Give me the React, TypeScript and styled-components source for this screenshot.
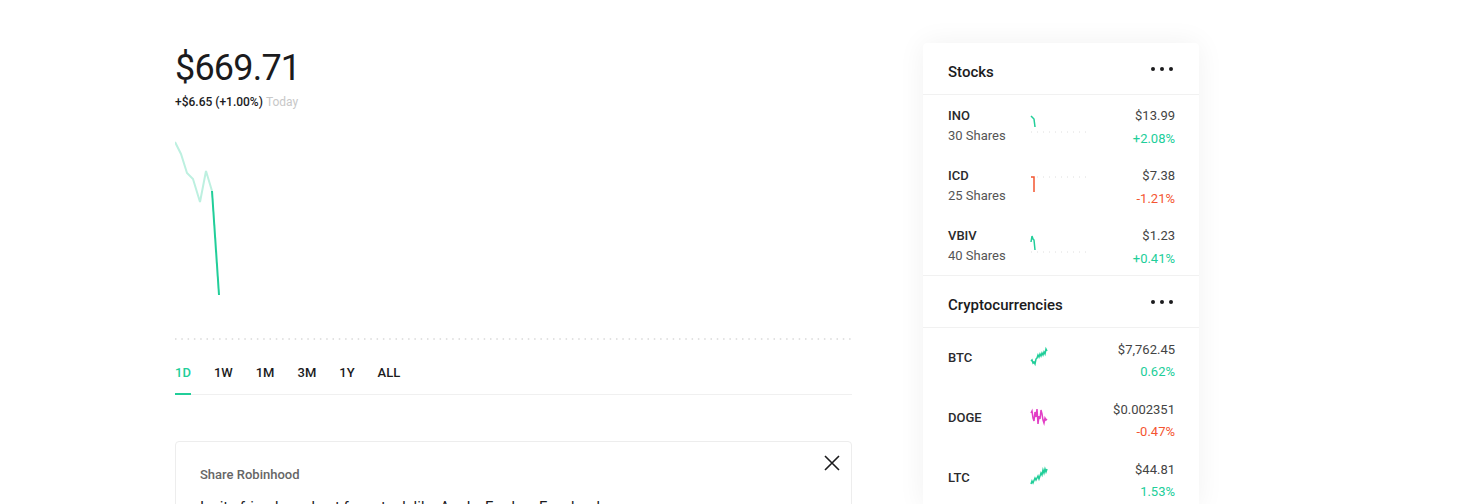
import React, { useState } from "react";
import styled, { createGlobalStyle } from "styled-components";

const GREEN = "#21ce99";
const GREEN_LIGHT = "#bdf0e0";
const RED = "#f45531";
const MAGENTA = "#e23fc6";
const TEXT = "#1b1b1d";

const GlobalStyle = createGlobalStyle`
  html, body {
    margin: 0;
    padding: 0;
    background: #fff;
    overflow: hidden;
  }
  body {
    font-family: Roboto, "Noto Sans", "Liberation Sans", sans-serif;
    color: ${TEXT};
    -webkit-font-smoothing: antialiased;
  }
`;

type Stock = { ticker: string; shares: string; price: string; change: string; up: boolean; line: string; flatY: number };
type Crypto = { ticker: string; price: string; change: string; up: boolean; color: string; line: string };

const stocks: Stock[] = [
  { ticker: "INO", shares: "30 Shares", price: "$13.99", change: "+2.08%", up: true, line: "1,10 2,11 3,12 4,13 5,21", flatY: 26 },
  { ticker: "ICD", shares: "25 Shares", price: "$7.38", change: "-1.21%", up: false, line: "1,11 4,11 4,26", flatY: 11 },
  { ticker: "VBIV", shares: "40 Shares", price: "$1.23", change: "+0.41%", up: true, line: "1,16 2,10 3,13 4,14 5,24", flatY: 26 },
];

const cryptos: Crypto[] = [
  {
    ticker: "BTC",
    price: "$7,762.45",
    change: "0.62%",
    up: true,
    color: GREEN,
    line: "1,23 2,22 3,25 4,24 5,26 6,21 7,20 8,17 9,19 10,16 11,18 12,15 13,17 14,14 15,16 16,11 17,13",
  },
  {
    ticker: "DOGE",
    price: "$0.002351",
    change: "-0.47%",
    up: false,
    color: MAGENTA,
    line: "1,15 2,13 3,20 4,23 5,14 6,19 7,11 8,26 9,18 10,21 11,12 12,16 13,22 14,25 15,20 16,22 17,21",
  },
  {
    ticker: "LTC",
    price: "$44.81",
    change: "1.53%",
    up: true,
    color: GREEN,
    line: "1,26 2,23 3,25 5,20 6,22 8,18 9,21 11,15 12,17 13,12 14,15 15,11 16,14 17,11",
  },
];

const ranges = ["1D", "1W", "1M", "3M", "1Y", "ALL"];

export default function App() {
  const [range, setRange] = useState("1D");
  const [showShare, setShowShare] = useState(true);

  return (
    <Page>
      <GlobalStyle />
      <Main>
        <Price>$669.71</Price>
        <Change>
          +$6.65 (+1.00%) <Muted>Today</Muted>
        </Change>

        <Chart width="677" height="225" viewBox="0 0 677 225">
          <line x1="0" y1="218" x2="677" y2="218" stroke="#d9d9d9" strokeWidth="1.5" strokeDasharray="1.5 4.8" />
          <polyline points="0,21 6,33 12,52 18,58 25,81 31,50 37,70" fill="none" stroke={GREEN_LIGHT} strokeWidth="2" />
          <polyline points="37,70 44,174" fill="none" stroke={GREEN} strokeWidth="2" />
        </Chart>

        <TabBar>
          {ranges.map((r) => (
            <Tab key={r} active={r === range} onClick={() => setRange(r)}>
              {r}
            </Tab>
          ))}
        </TabBar>

        {showShare && (
          <ShareCard>
            <ShareTitle>Share Robinhood</ShareTitle>
            <CloseButton onClick={() => setShowShare(false)} aria-label="close">
              <svg width="16" height="16" viewBox="0 0 16 16">
                <path d="M1 1 L15 15 M15 1 L1 15" stroke="#1b1b1d" strokeWidth="1.6" fill="none" />
              </svg>
            </CloseButton>
            <ShareText>Invite friends and get free stock like Apple, Ford, or Facebook.</ShareText>
          </ShareCard>
        )}
      </Main>

      <Sidebar>
        <Section>
          <SectionHeader>
            <SectionTitle>Stocks</SectionTitle>
            <Dots />
          </SectionHeader>
          {stocks.map((s) => (
            <Row key={s.ticker}>
              <div>
                <Ticker>{s.ticker}</Ticker>
                <Sub>{s.shares}</Sub>
              </div>
              <svg width="58" height="40" viewBox="0 0 58 40">
                <line x1="1" y1={s.flatY} x2="58" y2={s.flatY} stroke="#dedede" strokeWidth="1" strokeDasharray="1 5" />
                <polyline points={s.line} fill="none" stroke={s.up ? GREEN : RED} strokeWidth="1.5" />
              </svg>
              <Values>
                <Value>{s.price}</Value>
                <Percent up={s.up}>{s.change}</Percent>
              </Values>
            </Row>
          ))}
        </Section>

        <Section>
          <SectionHeader>
            <SectionTitle>Cryptocurrencies</SectionTitle>
            <Dots />
          </SectionHeader>
          {cryptos.map((c) => (
            <Row key={c.ticker} crypto>
              <Ticker>{c.ticker}</Ticker>
              <svg width="58" height="40" viewBox="0 0 58 40">
                <polyline points={c.line} fill="none" stroke={c.color} strokeWidth="1.5" />
              </svg>
              <Values crypto>
                <Value>{c.price}</Value>
                <Percent up={c.up} crypto>{c.change}</Percent>
              </Values>
            </Row>
          ))}
        </Section>
      </Sidebar>
    </Page>
  );
}

const Dots = () => (
  <DotsButton aria-label="more">
    <svg width="22" height="4" viewBox="0 0 22 4">
      <circle cx="2" cy="2" r="2" fill="#1b1b1d" />
      <circle cx="11" cy="2" r="2" fill="#1b1b1d" />
      <circle cx="20" cy="2" r="2" fill="#1b1b1d" />
    </svg>
  </DotsButton>
);

const Page = styled.div`
  display: flex;
  align-items: flex-start;
  gap: 71px;
  padding: 43px 0 0 175px;
  height: 504px;
  box-sizing: border-box;
`;

const Main = styled.div`
  width: 677px;
  flex: none;
  padding-top: 4px;
`;

const Price = styled.div`
  font-size: 36px;
  line-height: 42px;
  font-weight: 400;
  letter-spacing: -0.8px;
  color: ${TEXT};
`;

const Change = styled.div`
  font-size: 12px;
  line-height: 16px;
  font-weight: 500;
  margin-top: 5px;
  color: ${TEXT};
`;

const Muted = styled.span`
  color: #c8c8c8;
  font-weight: 400;
`;

const Chart = styled.svg`
  display: block;
  margin-top: 11px;
`;

const TabBar = styled.div`
  display: flex;
  gap: 23px;
  margin-top: 19px;
  border-bottom: 1px solid #f0f0f0;
`;

const Tab = styled.button<{ active?: boolean }>`
  font-family: inherit;
  font-size: 13px;
  line-height: 16px;
  font-weight: 500;
  background: none;
  border: none;
  padding: 0 0 12px;
  margin: 0 0 -1px;
  cursor: pointer;
  color: ${(p) => (p.active ? GREEN : TEXT)};
  border-bottom: 2px solid ${(p) => (p.active ? GREEN : "transparent")};
`;

const ShareCard = styled.div`
  position: relative;
  margin-top: 46px;
  border: 1px solid #ededed;
  border-radius: 4px;
  padding: 25px 24px 24px;
`;

const ShareTitle = styled.div`
  font-size: 13px;
  line-height: 16px;
  font-weight: 500;
  color: #666;
`;

const ShareText = styled.div`
  margin-top: 14px;
  font-size: 15px;
  line-height: 20px;
  color: ${TEXT};
`;

const CloseButton = styled.button`
  position: absolute;
  top: 13px;
  right: 11px;
  background: none;
  border: none;
  padding: 0;
  width: 16px;
  height: 16px;
  cursor: pointer;
  display: flex;
`;

const Sidebar = styled.div`
  width: 276px;
  flex: none;
  background: #fff;
  border-radius: 4px;
  box-shadow: 0 0 28px rgba(0, 0, 0, 0.06);
`;

const Section = styled.section`
  & + & {
    border-top: 1px solid #f1f1f1;
  }
`;

const SectionHeader = styled.div`
  height: 52px;
  box-sizing: border-box;
  padding: 6px 26px 0 25px;
  display: flex;
  align-items: center;
  justify-content: space-between;
  border-bottom: 1px solid #f1f1f1;
`;

const SectionTitle = styled.div`
  font-size: 15px;
  font-weight: 500;
  color: ${TEXT};
`;

const DotsButton = styled.button`
  background: none;
  border: none;
  padding: 0;
  margin-bottom: 6px;
  display: flex;
  cursor: pointer;
`;

const Row = styled.div<{ crypto?: boolean }>`
  height: 60px;
  box-sizing: border-box;
  padding: ${(p) => (p.crypto ? "0" : "2px")} 24px 0 25px;
  display: grid;
  grid-template-columns: 82px 58px 1fr;
  align-items: center;
`;

const Ticker = styled.div`
  font-size: 13px;
  line-height: 20px;
  font-weight: 500;
  color: #2a2a2c;
`;

const Sub = styled.div`
  font-size: 13px;
  line-height: 20px;
  color: #555;
`;

const Values = styled.div<{ crypto?: boolean }>`
  text-align: right;
  padding-top: ${(p) => (p.crypto ? "6px" : "3px")};
`;

const Value = styled.div`
  font-size: 13px;
  line-height: 20px;
  color: #444;
`;

const Percent = styled.div<{ up?: boolean; crypto?: boolean }>`
  font-size: 13px;
  line-height: 20px;
  margin-top: ${(p) => (p.crypto ? "2px" : "3px")};
  color: ${(p) => (p.up ? GREEN : RED)};
`;
